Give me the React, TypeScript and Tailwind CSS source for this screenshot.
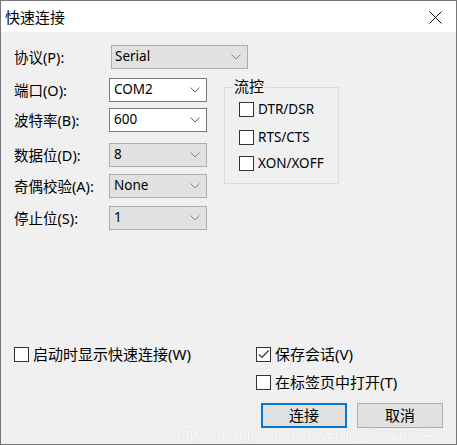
import React from "react";

const fields = [
  { label: "端口(O):", value: "COM2", gray: false, mt: "mt-0" },
  { label: "波特率(B):", value: "600", gray: false, mt: "mt-[6px]" },
  { label: "数据位(D):", value: "8", gray: true, mt: "mt-[11px]" },
  { label: "奇偶校验(A):", value: "None", gray: true, mt: "mt-[7px]" },
  { label: "停止位(S):", value: "1", gray: true, mt: "mt-[8px]" },
];

const flow = [
  { label: "DTR/DSR", mt: "mt-0" },
  { label: "RTS/CTS", mt: "mt-[13px]" },
  { label: "XON/XOFF", mt: "mt-[11px]" },
];

const Chevron = ({ gray }: { gray: boolean }) => (
  <svg width="10" height="6" viewBox="0 0 10 6" className="shrink-0">
    <path d="M0.5 0.5 L5 5 L9.5 0.5" fill="none" stroke={gray ? "#7a7a7a" : "#555555"} strokeWidth="0.9" />
  </svg>
);

const Combo = ({ value, gray, wide }: { value: string; gray: boolean; wide?: boolean }) => (
  <div
    className={`flex h-[24px] items-center justify-between border pr-[6px] text-[13.5px] leading-none text-black ${
      wide ? "w-[137px] pl-[3px]" : "w-[98px] pl-[4px]"
    } ${gray ? "border-[#adadad] bg-[#e1e1e1]" : "border-[#7a7a7a] bg-white"}`}
  >
    <span>{value}</span>
    <Chevron gray={gray} />
  </div>
);

const Check = ({ checked }: { checked?: boolean }) => (
  <span className="flex h-[15px] w-[15px] shrink-0 items-center justify-center border border-[#333333] bg-white">
    {checked && (
      <svg width="13" height="13" viewBox="0 0 13 13">
        <path d="M2 6.5 L5 9.5 L11.5 2.5" fill="none" stroke="#333333" strokeWidth="1.2" />
      </svg>
    )}
  </span>
);

const CheckRow = ({ label, checked, className = "" }: { label: string; checked?: boolean; className?: string }) => (
  <div className={`flex items-center gap-[4px] leading-none text-black ${className}`}>
    <Check checked={checked} />
    <span>{label}</span>
  </div>
);

const Button = ({ label, primary }: { label: string; primary?: boolean }) => (
  <div
    className={`flex h-[25px] w-[86px] items-center justify-center bg-[#e1e1e1] text-[15px] leading-none text-black ${
      primary ? "border-2 border-[#0078d7]" : "border border-[#adadad]"
    }`}
  >
    {label}
  </div>
);

export default function App() {
  return (
    <div className="relative flex h-[445px] w-[457px] flex-col border border-[#767676] bg-[#f0f0f0] font-['Noto_Sans','Noto_Sans_CJK_SC',sans-serif]">
      {/* title bar */}
      <div className="flex h-[31px] shrink-0 items-center justify-between bg-white pl-[4px] pr-[14px] pt-[2px]">
        <span className="text-[15px] leading-none text-black">快速连接</span>
        <svg width="13" height="13" viewBox="0 0 13 13">
          <path d="M0.5 0.5 L12.5 12.5 M12.5 0.5 L0.5 12.5" stroke="#111111" strokeWidth="1" />
        </svg>
      </div>

      <div className="flex flex-1 flex-col px-[13px] pt-[13px] pb-[16px]">
        <div className="flex items-center">
          <span className="w-[97px] text-[14.5px] leading-none text-black">协议(P):</span>
          <Combo value="Serial" gray wide />
        </div>

        <div className="mt-[9px] flex items-start">
          <div className="flex flex-col">
            {fields.map((f) => (
              <div key={f.label} className={`flex items-center ${f.mt}`}>
                <span className="w-[95px] text-[14.5px] leading-none text-black">{f.label}</span>
                <Combo value={f.value} gray={f.gray} />
              </div>
            ))}
          </div>

          <div className="relative ml-[17px] mt-[9px] h-[97px] w-[115px] border border-[#dcdcdc] pl-[14px] pt-[14px]">
            <span className="absolute -top-[9px] left-[8px] bg-[#f0f0f0] px-[1px] text-[15px] leading-none text-black">
              流控
            </span>
            {flow.map((c) => (
              <CheckRow key={c.label} label={c.label} className={`text-[13.5px] ${c.mt}`} />
            ))}
          </div>
        </div>

        <div className="mt-auto flex flex-col text-[15px]">
          <div className="flex items-center">
            <CheckRow label="启动时显示快速连接(W)" className="w-[242px]" />
            <CheckRow label="保存会话(V)" checked />
          </div>
          <CheckRow label="在标签页中打开(T)" className="ml-[242px] mt-[13px]" />
          <div className="mt-[13px] flex justify-end gap-[10px]">
            <Button label="连接" primary />
            <Button label="取消" />
          </div>
        </div>
      </div>

      <span className="pointer-events-none absolute bottom-[3px] left-[176px] font-['Liberation_Sans',sans-serif] text-[15px] leading-none text-[#fbfbfb] [text-shadow:0_0_1px_#c8c8c8]">
        https://blog.csdn.net/weixin_43726914
      </span>
    </div>
  );
}
